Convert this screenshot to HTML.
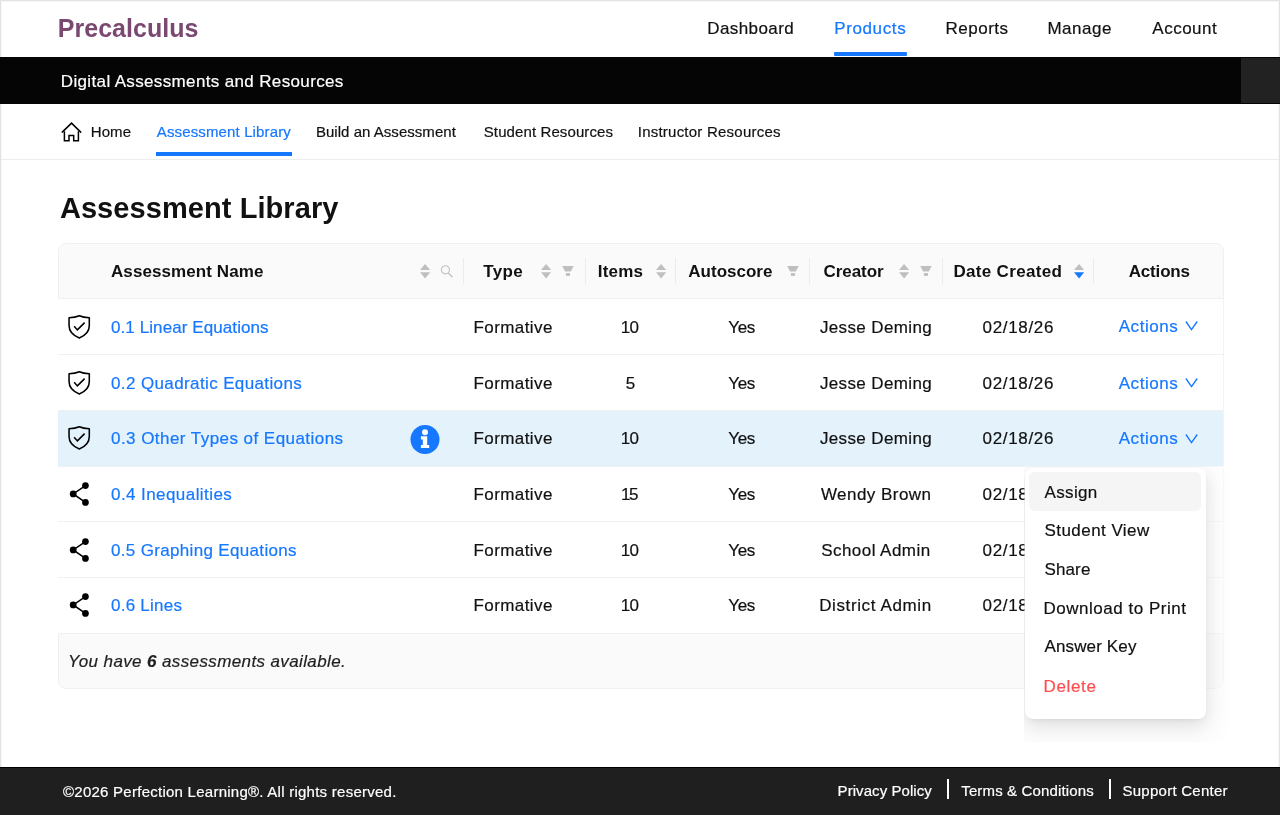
<!DOCTYPE html><html><head><meta charset="utf-8"><title>Assessment Library</title><style>
*{box-sizing:border-box}
html,body{margin:0;padding:0}
body{width:1280px;height:815px;overflow:hidden;position:relative;background:#fff;font-family:"Liberation Sans",sans-serif;color:#1f1f1f}
.t{position:absolute;white-space:nowrap}
.r{-webkit-text-stroke:0.2px currentColor}
.abs{position:absolute}
svg{overflow:visible}
</style></head><body><div id="page" style="position:absolute;left:0;top:0;width:1280px;height:815px;will-change:transform">
<div class="abs" style="left:0;top:0;width:1280px;height:815px;border:1px solid #e3e3e3;border-bottom:0;box-shadow:inset 1px 1px 0 #f6f6f6,inset -1px 0 0 #f6f6f6"></div>
<div class="abs" style="left:834px;top:52px;width:73px;height:4px;background:#1677ff;border-radius:1px"></div>
<div class="abs" style="left:0;top:57px;width:1280px;height:47px;background:#050505"></div>
<div class="abs" style="left:1241px;top:58px;width:39px;height:45px;background:#222"></div>
<div class="abs" style="left:1px;top:159px;width:1278px;height:1px;background:#ececec"></div>
<div class="abs" style="left:156px;top:152px;width:136px;height:4px;background:#1677ff"></div>
<svg class="abs" style="left:60px;top:120px" width="24" height="24" viewBox="60 120 24 24"><path d="M62.2,132.1 L71.55,123.1 L80.7,132.1" fill="none" stroke="#000" stroke-width="1.5" stroke-linejoin="miter" stroke-linecap="round"/><path d="M64.4,131.2 V140.7 H69 V135.5 H73.7 V140.7 H78.4 V131.2" fill="none" stroke="#000" stroke-width="1.5" stroke-linejoin="miter" stroke-linecap="butt"/></svg>
<div class="abs" style="left:58px;top:243px;width:1166px;height:56px;background:#fafafa;border-radius:8px 8px 0 0;border:1px solid #f0f0f0"></div>
<div class="abs" style="left:463.0px;top:258px;width:1px;height:26px;background:#ececec"></div>
<div class="abs" style="left:584.5px;top:258px;width:1px;height:26px;background:#ececec"></div>
<div class="abs" style="left:674.5px;top:258px;width:1px;height:26px;background:#ececec"></div>
<div class="abs" style="left:808.5px;top:258px;width:1px;height:26px;background:#ececec"></div>
<div class="abs" style="left:941.5px;top:258px;width:1px;height:26px;background:#ececec"></div>
<div class="abs" style="left:1093.0px;top:258px;width:1px;height:26px;background:#ececec"></div>
<div class="abs" style="left:58px;top:410px;width:1166px;height:56px;background:#e4f2fc"></div>
<div class="abs" style="left:58px;top:354px;width:1166px;height:1px;background:#f0f0f0"></div>
<div class="abs" style="left:58px;top:410px;width:1166px;height:1px;background:#f0f0f0"></div>
<div class="abs" style="left:58px;top:466px;width:1166px;height:1px;background:#f0f0f0"></div>
<div class="abs" style="left:58px;top:521px;width:1166px;height:1px;background:#f0f0f0"></div>
<div class="abs" style="left:58px;top:577px;width:1166px;height:1px;background:#f0f0f0"></div>
<div class="abs" style="left:1223px;top:299px;width:1px;height:334px;background:#f3f3f3"></div>
<div class="abs" style="left:58px;top:633px;width:1166px;height:56px;background:#fafafa;border-radius:0 0 8px 8px;border:1px solid #f0f0f0"></div>
<div class="t r" style="left:68px;top:645px;font-size:17px;line-height:34px;font-style:italic;letter-spacing:0.38px">You have <b>6</b> assessments available.</div>
<svg class="abs" style="left:62px;top:310.0px" width="34" height="34" viewBox="62 310 34 34"><path d="M69.05,317.7 C73.6,317.6 76.6,317 79.3,315.75 C82,317 85,317.6 89.3,317.7 L89.3,325.6 C89.3,330.6 85.8,335.5 79.3,338 C72.8,335.5 69.05,330.6 69.05,325.6 Z" fill="none" stroke="#000" stroke-width="1.55" stroke-linejoin="round"/><path d="M74.1,326.3 L77.4,329.9 L84.6,322.6" fill="none" stroke="#000" stroke-width="1.55"/></svg>
<svg class="abs" style="left:62px;top:365.7px" width="34" height="34" viewBox="62 310 34 34"><path d="M69.05,317.7 C73.6,317.6 76.6,317 79.3,315.75 C82,317 85,317.6 89.3,317.7 L89.3,325.6 C89.3,330.6 85.8,335.5 79.3,338 C72.8,335.5 69.05,330.6 69.05,325.6 Z" fill="none" stroke="#000" stroke-width="1.55" stroke-linejoin="round"/><path d="M74.1,326.3 L77.4,329.9 L84.6,322.6" fill="none" stroke="#000" stroke-width="1.55"/></svg>
<svg class="abs" style="left:62px;top:421.4px" width="34" height="34" viewBox="62 310 34 34"><path d="M69.05,317.7 C73.6,317.6 76.6,317 79.3,315.75 C82,317 85,317.6 89.3,317.7 L89.3,325.6 C89.3,330.6 85.8,335.5 79.3,338 C72.8,335.5 69.05,330.6 69.05,325.6 Z" fill="none" stroke="#000" stroke-width="1.55" stroke-linejoin="round"/><path d="M74.1,326.3 L77.4,329.9 L84.6,322.6" fill="none" stroke="#000" stroke-width="1.55"/></svg>
<svg class="abs" style="left:62px;top:477.0px" width="34" height="34" viewBox="62 477 34 34"><path d="M85.45,485.55 L73.2,493.9 L85.45,502.45" fill="none" stroke="#000" stroke-width="1.5"/><circle cx="85.45" cy="485.55" r="3.35"/><circle cx="73.2" cy="493.9" r="3.4"/><circle cx="85.45" cy="502.45" r="3.35"/></svg>
<svg class="abs" style="left:62px;top:532.7px" width="34" height="34" viewBox="62 477 34 34"><path d="M85.45,485.55 L73.2,493.9 L85.45,502.45" fill="none" stroke="#000" stroke-width="1.5"/><circle cx="85.45" cy="485.55" r="3.35"/><circle cx="73.2" cy="493.9" r="3.4"/><circle cx="85.45" cy="502.45" r="3.35"/></svg>
<svg class="abs" style="left:62px;top:588.4px" width="34" height="34" viewBox="62 477 34 34"><path d="M85.45,485.55 L73.2,493.9 L85.45,502.45" fill="none" stroke="#000" stroke-width="1.5"/><circle cx="85.45" cy="485.55" r="3.35"/><circle cx="73.2" cy="493.9" r="3.4"/><circle cx="85.45" cy="502.45" r="3.35"/></svg>
<svg class="abs" style="left:410px;top:424px" width="30" height="30" viewBox="410 424 30 30"><circle cx="425" cy="439.5" r="14.5" fill="#1677ff"/><circle cx="425" cy="432.3" r="3" fill="#fff"/><path d="M420.9,436.2 H427.2 V445 H429.2 V448 H420.9 V445 H422.8 V439.5 H420.9 Z" fill="#fff"/></svg>
<svg class="abs" style="left:418.9px;top:262.8px" width="13" height="17" viewBox="-1 -1 13 17"><path d="M0,6.0 L5.1,0 L10.2,6.0 Z" fill="#bfbfbf"/><path d="M0,8.3 L10.2,8.3 L5.1,14.4 Z" fill="#bfbfbf"/></svg>
<svg class="abs" style="left:441px;top:266px" width="14" height="14" viewBox="0 0 14 14"><circle cx="4.4" cy="3.8" r="4.05" fill="none" stroke="#bfbfbf" stroke-width="1.1"/><path d="M7.4,7.1 L11,10.7" stroke="#bfbfbf" stroke-width="1.3" stroke-linecap="round"/></svg>
<svg class="abs" style="left:539.9px;top:262.8px" width="13" height="17" viewBox="-1 -1 13 17"><path d="M0,6.0 L5.1,0 L10.2,6.0 Z" fill="#bfbfbf"/><path d="M0,8.3 L10.2,8.3 L5.1,14.4 Z" fill="#bfbfbf"/></svg>
<svg class="abs" style="left:562px;top:266px" width="13" height="11" viewBox="0 0 13 11"><path d="M0.25,0.1 H11.7 L8.8,5.6 H3.1 Z" fill="#bfbfbf"/><rect x="3.9" y="7.1" width="4.1" height="2.8" fill="#bfbfbf"/></svg>
<svg class="abs" style="left:654.9px;top:262.8px" width="13" height="17" viewBox="-1 -1 13 17"><path d="M0,6.0 L5.1,0 L10.2,6.0 Z" fill="#bfbfbf"/><path d="M0,8.3 L10.2,8.3 L5.1,14.4 Z" fill="#bfbfbf"/></svg>
<svg class="abs" style="left:786.5px;top:266px" width="13" height="11" viewBox="0 0 13 11"><path d="M0.25,0.1 H11.7 L8.8,5.6 H3.1 Z" fill="#bfbfbf"/><rect x="3.9" y="7.1" width="4.1" height="2.8" fill="#bfbfbf"/></svg>
<svg class="abs" style="left:897.5px;top:262.8px" width="13" height="17" viewBox="-1 -1 13 17"><path d="M0,6.0 L5.1,0 L10.2,6.0 Z" fill="#bfbfbf"/><path d="M0,8.3 L10.2,8.3 L5.1,14.4 Z" fill="#bfbfbf"/></svg>
<svg class="abs" style="left:919.5px;top:266px" width="13" height="11" viewBox="0 0 13 11"><path d="M0.25,0.1 H11.7 L8.8,5.6 H3.1 Z" fill="#bfbfbf"/><rect x="3.9" y="7.1" width="4.1" height="2.8" fill="#bfbfbf"/></svg>
<svg class="abs" style="left:1073px;top:262.8px" width="13" height="17" viewBox="-1 -1 13 17"><path d="M0,6.0 L5.1,0 L10.2,6.0 Z" fill="#bfbfbf"/><path d="M0,8.3 L10.2,8.3 L5.1,14.4 Z" fill="#1677ff"/></svg>
<svg class="abs" style="left:1184px;top:321.0px" width="15" height="12" viewBox="0 0 15 12"><path d="M1.9,0.5 L7.5,8.6 L13.2,0.5" fill="none" stroke="#1677ff" stroke-width="1.35"/></svg>
<svg class="abs" style="left:1184px;top:377.9px" width="15" height="12" viewBox="0 0 15 12"><path d="M1.9,0.5 L7.5,8.6 L13.2,0.5" fill="none" stroke="#1677ff" stroke-width="1.35"/></svg>
<svg class="abs" style="left:1184px;top:433.8px" width="15" height="12" viewBox="0 0 15 12"><path d="M1.9,0.5 L7.5,8.6 L13.2,0.5" fill="none" stroke="#1677ff" stroke-width="1.35"/></svg>
<div class="t" style="left:57.75px;top:3px;font-size:25px;line-height:50px;color:#7a4871;letter-spacing:0.030px;font-weight:700">Precalculus</div>
<div class="t r" style="left:707.20px;top:12px;font-size:17px;line-height:34px;color:#111111;letter-spacing:0.424px">Dashboard</div>
<div class="t r" style="left:834.20px;top:12px;font-size:17px;line-height:34px;color:#1677ff;letter-spacing:0.630px">Products</div>
<div class="t r" style="left:945.60px;top:12px;font-size:17px;line-height:34px;color:#111111;letter-spacing:0.479px">Reports</div>
<div class="t r" style="left:1047.40px;top:12px;font-size:17px;line-height:34px;color:#111111;letter-spacing:0.504px">Manage</div>
<div class="t r" style="left:1152.30px;top:12px;font-size:17px;line-height:34px;color:#111111;letter-spacing:0.500px">Account</div>
<div class="t r" style="left:60.80px;top:65px;font-size:17px;line-height:34px;color:#ffffff;letter-spacing:0.354px">Digital Assessments and Resources</div>
<div class="t r" style="left:90.70px;top:117px;font-size:15px;line-height:30px;color:#111111;letter-spacing:0.110px">Home</div>
<div class="t r" style="left:156.80px;top:117px;font-size:15px;line-height:30px;color:#1677ff;letter-spacing:0.135px">Assessment Library</div>
<div class="t r" style="left:315.90px;top:117px;font-size:15px;line-height:30px;color:#111111;letter-spacing:0.039px">Build an Assessment</div>
<div class="t r" style="left:483.75px;top:117px;font-size:15px;line-height:30px;color:#111111;letter-spacing:0.105px">Student Resources</div>
<div class="t r" style="left:637.75px;top:117px;font-size:15px;line-height:30px;color:#111111;letter-spacing:0.230px">Instructor Resources</div>
<div class="t" style="left:59.90px;top:179px;font-size:29px;line-height:58px;color:#111111;letter-spacing:0.076px;font-weight:700">Assessment Library</div>
<div class="t" style="left:111.00px;top:255px;font-size:17px;line-height:34px;color:#111111;letter-spacing:0.083px;font-weight:700">Assessment Name</div>
<div class="t" style="left:483.20px;top:255px;font-size:17px;line-height:34px;color:#111111;letter-spacing:0.380px;font-weight:700">Type</div>
<div class="t" style="left:597.70px;top:255px;font-size:17px;line-height:34px;color:#111111;letter-spacing:0.236px;font-weight:700">Items</div>
<div class="t" style="left:688.30px;top:255px;font-size:17px;line-height:34px;color:#111111;letter-spacing:0.011px;font-weight:700">Autoscore</div>
<div class="t" style="left:823.50px;top:255px;font-size:17px;line-height:34px;color:#111111;letter-spacing:-0.058px;font-weight:700">Creator</div>
<div class="t" style="left:953.50px;top:255px;font-size:17px;line-height:34px;color:#111111;letter-spacing:0.310px;font-weight:700">Date Created</div>
<div class="t" style="left:1128.70px;top:255px;font-size:17px;line-height:34px;color:#111111;letter-spacing:-0.164px;font-weight:700">Actions</div>
<div class="t r" style="left:111.00px;top:311px;font-size:17px;line-height:34px;color:#1677ff;letter-spacing:0.087px">0.1 Linear Equations</div>
<div class="t r" style="left:473.50px;top:311px;font-size:17px;line-height:34px;color:#111111;letter-spacing:0.411px">Formative</div>
<div class="t r" style="left:620.80px;top:311px;font-size:17px;line-height:34px;color:#111111;letter-spacing:-0.655px">10</div>
<div class="t r" style="left:728.30px;top:311px;font-size:17px;line-height:34px;color:#111111;letter-spacing:-0.366px">Yes</div>
<div class="t r" style="left:819.90px;top:311px;font-size:17px;line-height:34px;color:#111111;letter-spacing:0.377px">Jesse Deming</div>
<div class="t r" style="left:982.60px;top:311px;font-size:17px;line-height:34px;color:#111111;letter-spacing:0.669px">02/18/26</div>
<div class="t r" style="left:1118.70px;top:310px;font-size:17px;line-height:34px;color:#1677ff;letter-spacing:0.559px">Actions</div>
<div class="t r" style="left:111.00px;top:367px;font-size:17px;line-height:34px;color:#1677ff;letter-spacing:0.382px">0.2 Quadratic Equations</div>
<div class="t r" style="left:473.50px;top:367px;font-size:17px;line-height:34px;color:#111111;letter-spacing:0.411px">Formative</div>
<div class="t r" style="left:625.80px;top:367px;font-size:17px;line-height:34px;color:#111111;letter-spacing:0.000px">5</div>
<div class="t r" style="left:728.30px;top:367px;font-size:17px;line-height:34px;color:#111111;letter-spacing:-0.366px">Yes</div>
<div class="t r" style="left:819.90px;top:367px;font-size:17px;line-height:34px;color:#111111;letter-spacing:0.377px">Jesse Deming</div>
<div class="t r" style="left:982.60px;top:367px;font-size:17px;line-height:34px;color:#111111;letter-spacing:0.669px">02/18/26</div>
<div class="t r" style="left:1118.70px;top:367px;font-size:17px;line-height:34px;color:#1677ff;letter-spacing:0.559px">Actions</div>
<div class="t r" style="left:111.00px;top:422px;font-size:17px;line-height:34px;color:#1677ff;letter-spacing:0.452px">0.3 Other Types of Equations</div>
<div class="t r" style="left:473.50px;top:422px;font-size:17px;line-height:34px;color:#111111;letter-spacing:0.411px">Formative</div>
<div class="t r" style="left:620.80px;top:422px;font-size:17px;line-height:34px;color:#111111;letter-spacing:-0.655px">10</div>
<div class="t r" style="left:728.30px;top:422px;font-size:17px;line-height:34px;color:#111111;letter-spacing:-0.366px">Yes</div>
<div class="t r" style="left:819.90px;top:422px;font-size:17px;line-height:34px;color:#111111;letter-spacing:0.377px">Jesse Deming</div>
<div class="t r" style="left:982.60px;top:422px;font-size:17px;line-height:34px;color:#111111;letter-spacing:0.669px">02/18/26</div>
<div class="t r" style="left:1118.70px;top:422px;font-size:17px;line-height:34px;color:#1677ff;letter-spacing:0.559px">Actions</div>
<div class="t r" style="left:111.00px;top:478px;font-size:17px;line-height:34px;color:#1677ff;letter-spacing:0.429px">0.4 Inequalities</div>
<div class="t r" style="left:473.50px;top:478px;font-size:17px;line-height:34px;color:#111111;letter-spacing:0.411px">Formative</div>
<div class="t r" style="left:621.00px;top:478px;font-size:17px;line-height:34px;color:#111111;letter-spacing:-1.355px">15</div>
<div class="t r" style="left:728.30px;top:478px;font-size:17px;line-height:34px;color:#111111;letter-spacing:-0.366px">Yes</div>
<div class="t r" style="left:820.90px;top:478px;font-size:17px;line-height:34px;color:#111111;letter-spacing:0.464px">Wendy Brown</div>
<div class="t r" style="left:982.60px;top:478px;font-size:17px;line-height:34px;color:#111111;letter-spacing:0.669px">02/18/26</div>
<div class="t r" style="left:1118.70px;top:478px;font-size:17px;line-height:34px;color:#1677ff;letter-spacing:0.559px">Actions</div>
<div class="t r" style="left:111.00px;top:534px;font-size:17px;line-height:34px;color:#1677ff;letter-spacing:0.332px">0.5 Graphing Equations</div>
<div class="t r" style="left:473.50px;top:534px;font-size:17px;line-height:34px;color:#111111;letter-spacing:0.411px">Formative</div>
<div class="t r" style="left:620.80px;top:534px;font-size:17px;line-height:34px;color:#111111;letter-spacing:-0.655px">10</div>
<div class="t r" style="left:728.30px;top:534px;font-size:17px;line-height:34px;color:#111111;letter-spacing:-0.366px">Yes</div>
<div class="t r" style="left:821.20px;top:534px;font-size:17px;line-height:34px;color:#111111;letter-spacing:0.451px">School Admin</div>
<div class="t r" style="left:982.60px;top:534px;font-size:17px;line-height:34px;color:#111111;letter-spacing:0.669px">02/18/26</div>
<div class="t r" style="left:1118.70px;top:534px;font-size:17px;line-height:34px;color:#1677ff;letter-spacing:0.559px">Actions</div>
<div class="t r" style="left:111.00px;top:589px;font-size:17px;line-height:34px;color:#1677ff;letter-spacing:0.250px">0.6 Lines</div>
<div class="t r" style="left:473.50px;top:589px;font-size:17px;line-height:34px;color:#111111;letter-spacing:0.411px">Formative</div>
<div class="t r" style="left:620.80px;top:589px;font-size:17px;line-height:34px;color:#111111;letter-spacing:-0.655px">10</div>
<div class="t r" style="left:728.30px;top:589px;font-size:17px;line-height:34px;color:#111111;letter-spacing:-0.366px">Yes</div>
<div class="t r" style="left:819.20px;top:589px;font-size:17px;line-height:34px;color:#111111;letter-spacing:0.616px">District Admin</div>
<div class="t r" style="left:982.60px;top:589px;font-size:17px;line-height:34px;color:#111111;letter-spacing:0.669px">02/18/26</div>
<div class="t r" style="left:1118.70px;top:589px;font-size:17px;line-height:34px;color:#1677ff;letter-spacing:0.559px">Actions</div>
<div class="abs" style="left:1024px;top:466px;width:207px;height:276px;overflow:hidden;background:rgba(255,255,255,0.55)"><div class="abs" style="left:0.5px;top:1.7px;width:181.5px;height:251.3px;background:#fff;border-radius:8px;box-shadow:0 6px 16px 0 rgba(0,0,0,0.08),0 3px 6px -4px rgba(0,0,0,0.12),0 9px 28px 8px rgba(0,0,0,0.05)"><div class="abs" style="left:4.75px;top:4.3px;width:172px;height:38.7px;background:#f5f5f5;border-radius:6px"></div></div></div>
<div class="t r" style="left:1044.50px;top:476px;font-size:17px;line-height:34px;color:#111111;letter-spacing:0.346px">Assign</div>
<div class="t r" style="left:1044.50px;top:514px;font-size:17px;line-height:34px;color:#111111;letter-spacing:0.446px">Student View</div>
<div class="t r" style="left:1044.50px;top:553px;font-size:17px;line-height:34px;color:#111111;letter-spacing:0.123px">Share</div>
<div class="t r" style="left:1043.50px;top:592px;font-size:17px;line-height:34px;color:#111111;letter-spacing:0.518px">Download to Print</div>
<div class="t r" style="left:1044.50px;top:630px;font-size:17px;line-height:34px;color:#111111;letter-spacing:0.133px">Answer Key</div>
<div class="t r" style="left:1043.50px;top:670px;font-size:17px;line-height:34px;color:#ff4d4f;letter-spacing:0.643px">Delete</div>
<div class="abs" style="left:0;top:767px;width:1280px;height:48px;background:#1f1f1f;border-top:1px solid #000"></div><div class="abs" style="left:947px;top:779px;width:2px;height:20px;background:#fff"></div><div class="abs" style="left:1109px;top:779px;width:2px;height:20px;background:#fff"></div>
<div class="t r" style="left:63.00px;top:777px;font-size:15px;line-height:30px;color:#ffffff;letter-spacing:0.253px">©2026 Perfection Learning®. All rights reserved.</div>
<div class="t r" style="left:837.60px;top:776px;font-size:15px;line-height:30px;color:#ffffff;letter-spacing:0.065px">Privacy Policy</div>
<div class="t r" style="left:961.25px;top:776px;font-size:15px;line-height:30px;color:#ffffff;letter-spacing:0.141px">Terms &amp; Conditions</div>
<div class="t r" style="left:1122.50px;top:776px;font-size:15px;line-height:30px;color:#ffffff;letter-spacing:0.251px">Support Center</div>
</div></body></html>
